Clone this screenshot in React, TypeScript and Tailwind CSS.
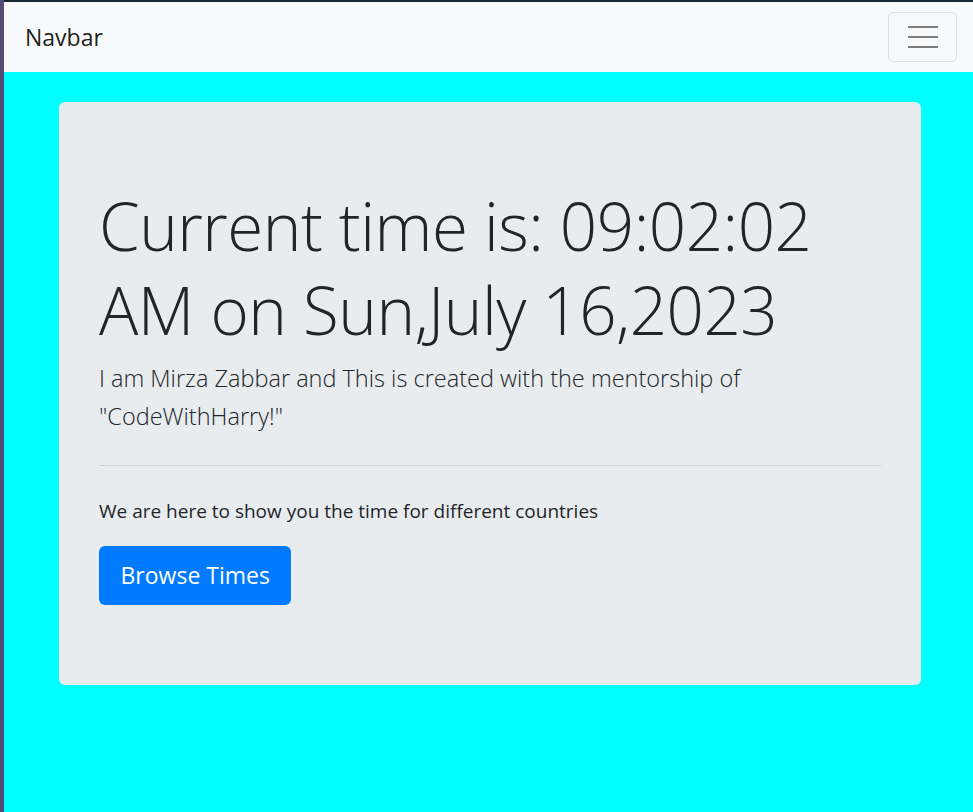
// Página do relógio: navbar clara + jumbotron cinza sobre fundo ciano

function Toggler() {
  // Botão hambúrguer do navbar (estilo bootstrap)
  return (
    <button className="flex h-[50px] w-[69px] items-center justify-center rounded-[5px] border border-black/10">
      <svg width="30" height="22" viewBox="0 0 30 22" fill="none">
        <path d="M0 1h30M0 11h30M0 21h30" stroke="rgba(0,0,0,0.5)" strokeWidth="2.2" strokeLinecap="round" />
      </svg>
    </button>
  );
}

export default function App() {
  return (
    <div className="flex min-h-[812px] bg-[#1c2a31] font-['Open_Sans',sans-serif] text-[#212529]">
      {/* faixa da área de trabalho à esquerda */}
      <div className="w-[4px] bg-[#574b78]" />
      <div className="mt-[2px] flex flex-1 flex-col bg-[#00ffff]">
        {/* Navbar */}
        <nav className="flex h-[70px] items-center justify-between bg-[#f8f9fa] pl-[21px] pr-[16px]">
          <span className="text-[23px] text-black/90">Navbar</span>
          <Toggler />
        </nav>

        {/* Jumbotron */}
        <div className="ml-[55px] mr-[52px] mt-[30px] rounded-[6px] bg-[#e9ecef] px-[40px] py-[80px]">
          <h1 className="mb-[8px] pt-[2px] text-[65.5px] font-light leading-[84px] tracking-[-0.5px]">
            Current time is: 09:02:02
            <br />
            AM on Sun,July 16,2023
          </h1>
          <p className="text-[23.5px] font-light leading-[37.5px]">
            I am Mirza Zabbar and This is created with the mentorship of
            <br />
            "CodeWithHarry!"
          </p>
          <hr className="my-[30px] border-t border-black/10" />
          <p className="mb-[20px] text-[19px] leading-[30px]">
            We are here to show you the time for different countries
          </p>
          <button className="h-[59px] rounded-[6px] bg-[#007bff] px-[21.5px] text-[23px] text-white">
            Browse Times
          </button>
        </div>
      </div>
    </div>
  );
}
